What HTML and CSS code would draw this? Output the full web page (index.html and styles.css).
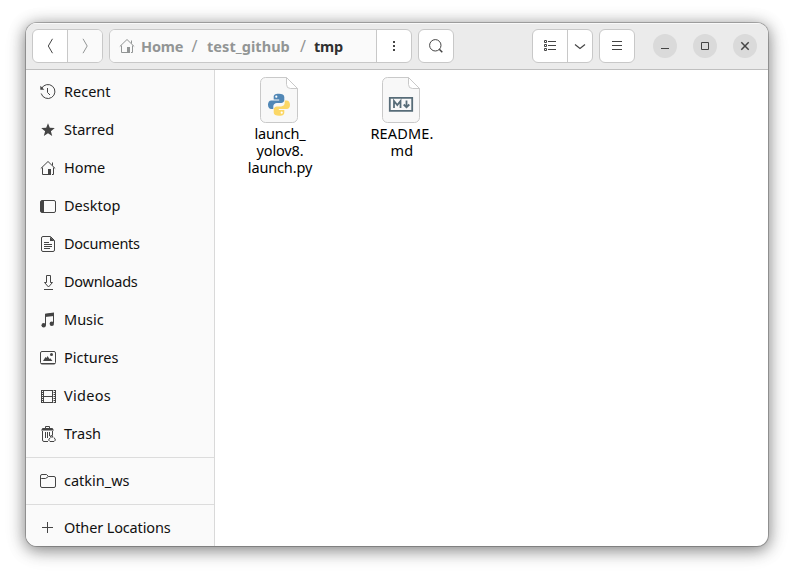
FILE: index.html
```html
<!DOCTYPE html>
<html lang="en">
<head>
<meta charset="utf-8">
<title>tmp</title>
<link rel="stylesheet" href="styles.css">
</head>
<body>
<div class="window">
  <header class="headerbar">
    <div class="group nav">
      <button class="btn"><svg width="16" height="16" viewBox="0 0 16 16"><path d="M10.500 .8 6.300 8l4.200 7.200"/></svg></button>
      <button class="btn off"><svg width="16" height="16" viewBox="0 0 16 16"><path d="M6 .8 10.200 8 6 15.200"/></svg></button>
    </div>
    <div class="group path">
      <div class="crumbs">
        <svg width="16" height="16" viewBox="0 0 16 16"><path d="M.8 8.500 8 1.500l7.200 7M12.500 2.500v3M2.500 7.500v7h6M13.500 7.500v7H12"/><path class="solid" d="M8 9h3v6H8z"/></svg>
        <span class="crumb home">Home</span><span class="slash">/</span><span class="crumb repo">test_github</span><span class="slash">/</span><span class="crumb current">tmp</span>
      </div>
      <button class="btn"><svg width="16" height="16" viewBox="0 0 16 16"><path class="solid" d="M7 3h2v2H7zM7 7h2v2H7zM7 11h2v2H7z"/></svg></button>
    </div>
    <div class="group"><button class="btn single"><svg width="16" height="16" viewBox="0 0 16 16"><circle cx="7.300" cy="7.300" r="5.700"/><path d="m11.300 11.300 3 3" stroke-width="1.500"/></svg></button></div>
    <div class="group view">
      <button class="btn"><svg width="16" height="16" viewBox="0 0 16 16"><path d="M2.500 2.500h2v2h-2zM2.500 6.500h2v2h-2zM2.500 10.500h2v2h-2zM6 3.500h8M6 7.500h8M6 11.500h8"/></svg></button>
      <button class="btn narrow"><svg width="16" height="16" viewBox="0 0 16 16"><path d="m3 6.500 5 4 5-4" stroke-width="1.200"/></svg></button>
    </div>
    <div class="group menu"><button class="btn single"><svg width="16" height="16" viewBox="0 0 16 16"><path d="M3 3.500h10M3 7.500h10M3 11.500h10"/></svg></button></div>
    <div class="controls">
      <button class="control"><svg width="16" height="16" viewBox="0 0 16 16"><path d="M4 10.500h8"/></svg></button>
      <button class="control"><svg width="16" height="16" viewBox="0 0 16 16"><path d="M4.500 4.500h7v7h-7z"/></svg></button>
      <button class="control"><svg width="16" height="16" viewBox="0 0 16 16"><path d="m4.300 4.300 7.400 7.400m0-7.400-7.400 7.400" stroke-width="1.500"/></svg></button>
    </div>
  </header>
  <div class="body">
    <nav class="sidebar">
      <div class="row"><svg width="16" height="16" viewBox="0 0 16 16"><path d="M1.600 4.500A7 7 0 1 1 1.200 9.500"/><path d="M7.500 4v4.500l2.500 2.500"/><path class="solid" d="M.3 1.800v4h4z"/></svg><span>Recent</span></div>
      <div class="row"><svg width="16" height="16" viewBox="0 0 16 16"><path class="solid" d="m8 1.200 1.800 4.600 5 .3-3.900 3.100 1.300 4.800L8 11.300 3.800 14l1.300-4.800-3.900-3.100 5-.3z"/></svg><span>Starred</span></div>
      <div class="row"><svg width="16" height="16" viewBox="0 0 16 16"><path d="M.8 8.500 8 1.500l7.200 7M12.500 2.500v3M2.500 7.500v7h6M13.500 7.500v7H12"/><path class="solid" d="M8 9h3v6H8z"/></svg><span>Home</span></div>
      <div class="row"><svg width="16" height="16" viewBox="0 0 16 16"><rect x=".5" y="2.500" width="15" height="12" rx="1.500"/><path class="solid" d="M1 3h3v11H1z"/></svg><span>Desktop</span></div>
      <div class="row"><svg width="16" height="16" viewBox="0 0 16 16"><path d="M3 .5h7.500l4 4V14a1.500 1.500 0 0 1-1.500 1.500H3A1.500 1.500 0 0 1 1.500 14V2A1.500 1.500 0 0 1 3 .5z"/><path class="solid" d="M10 .8V5h4.500z"/><path d="M4 6.500h5M4 8.500h8M4 10.500h8M4 12.500h6"/></svg><span class="tight">Documents</span></div>
      <div class="row"><svg width="16" height="16" viewBox="0 0 16 16"><path d="M6.500 1.500h4v7h2L8.500 13l-4-4.500h2zM4 15.500h9"/></svg><span class="tight">Downloads</span></div>
      <div class="row"><svg width="16" height="16" viewBox="0 0 16 16"><path d="M5.500 13V2.500l8-1V11"/><path class="solid" d="M5 1.700 14 .5V4L5 5z"/><circle class="solid" cx="3.700" cy="13.200" r="2.200"/><circle class="solid" cx="11.800" cy="11.800" r="2.200"/></svg><span>Music</span></div>
      <div class="row"><svg width="16" height="16" viewBox="0 0 16 16"><rect x=".5" y="1.500" width="15" height="12.500" rx="1.500"/><path d="M1 13.500h14"/><path class="solid" d="m3 11 2.500-4 1 1 1-2 2 3 .8-.8L12.500 11z"/><circle class="solid" cx="11.500" cy="4.500" r="1.500"/></svg><span>Pictures</span></div>
      <div class="row"><svg width="16" height="16" viewBox="0 0 16 16"><path d="M2.500 2v13M14.500 2v13" stroke-width="2" stroke-dasharray="1 1"/><path d="M1.500 2v13M3.500 2v13M12.500 2v13M15.500 2v13M3 2.500h10M3 8.500h10M3 14.500h10"/></svg><span class="loose">Videos</span></div>
      <div class="row"><svg width="16" height="16" viewBox="0 0 16 16"><path d="M5.500 2V.5h4V2M2.500 5v9q0 1.500 1.500 1.500h4M12.500 5v4.500M5.500 6v6M7.500 6v6M9.500 6v4"/><path class="solid" d="M1 4.500 2.500 2h10L14 4.500z"/><path d="m11.500 9 1.500 2h-3zM10 12l-1.500 2 1.500 1.500h4l1.500-1.500-1.500-2.500"/></svg><span>Trash</span></div>
      <div class="separator"></div>
      <div class="row"><svg width="16" height="16" viewBox="0 0 16 16"><path d="M2 1.500h4.500l2 2H14A1.500 1.500 0 0 1 15.500 5v8a1.500 1.500 0 0 1-1.500 1.500H2A1.500 1.500 0 0 1 .5 13V3A1.500 1.500 0 0 1 2 1.500zM.5 6q0-.5 1-.5h4l3-2"/></svg><span>catkin_ws</span></div>
      <div class="separator"></div>
      <div class="row"><svg width="16" height="16" viewBox="0 0 16 16"><path d="M7.500 2v11M2 7.500h11"/></svg><span class="tight half">Other Locations</span></div>
    </nav>
    <main class="files">
      <div class="file">
        <svg class="doc" width="38" height="48" viewBox="0 0 38 48">
          <path class="page" d="M5.500 1.500h21L37.500 12.500v29a5 5 0 0 1-5 5h-27a5 5 0 0 1-5-5v-35a5 5 0 0 1 5-5z"/><path class="fold" d="M26.500 1.500v7a4 4 0 0 0 4 4h7z"/>
          <g id="snake" transform="translate(19 28.700)">
            <path class="blue" d="M0-11c-4.600 0-5.300 1.700-5.300 3.300v2.500H.2v.9h-7.800C-10-4.300-11-2.300-11 0s1.200 4.300 3.300 4.300h2V1.600c0-2 1.700-3.300 3.500-3.300h4.400c1.700 0 3.100-1.400 3.100-3v-3C5.300-10 3-11 0-11z"/>
            <path class="yellow" transform="rotate(180)" d="M0-11c-4.600 0-5.300 1.700-5.300 3.300v2.500H.2v.9h-7.800C-10-4.300-11-2.300-11 0s1.200 4.300 3.300 4.300h2V1.600c0-2 1.700-3.300 3.500-3.300h4.400c1.700 0 3.100-1.400 3.100-3v-3C5.300-10 3-11 0-11z"/>
            <circle class="eye" cx="-2.700" cy="-8" r="1.100"/><circle class="eye" cx="2.700" cy="8" r="1.100"/>
          </g>
        </svg>
        <div class="label"><span>launch_</span><span>yolov8.</span><span>launch.py</span></div>
      </div>
      <div class="file">
        <svg class="doc" width="38" height="48" viewBox="0 0 38 48">
          <path class="page" d="M5.500 1.500h21L37.500 12.500v29a5 5 0 0 1-5 5h-27a5 5 0 0 1-5-5v-35a5 5 0 0 1 5-5z"/><path class="fold" d="M26.500 1.500v7a4 4 0 0 0 4 4h7z"/>
          <path class="md" d="M7.800 21.800h22.400v13H7.800zM12 32v-7l3.300 4 3.200-4v7M24.500 24.500V31m-2.800-2.500 2.800 2.700 2.800-2.700"/>
        </svg>
        <div class="label readme"><span>README.</span><span>md</span></div>
      </div>
    </main>
  </div>
</div>
</body>
</html>
```
FILE: styles.css
```css
* { box-sizing: border-box; }
body {
  margin: 0;
  padding: 23px 26px 29px;
  height: 575px;
  overflow: hidden;
  background: #fff;
  font: 14.5px/20px "Noto Sans", "Open Sans", sans-serif;
  color: #111;
}
svg { display: block; flex: none; fill: none; stroke: #444; stroke-width: 1; }
svg .solid { fill: #444; stroke: none; }
button { padding: 0; border: 0; background: none; }
.window {
  display: flex;
  flex-direction: column;
  width: 742px;
  height: 523px;
  overflow: hidden;
  border-radius: 11px;
  background: #fff;
  box-shadow: 0 0 0 1px rgba(0, 0, 0, .23), 0 3px 16px 1px rgba(0, 0, 0, .45), 0 4px 24px rgba(0, 0, 0, .1);
}
.headerbar {
  display: flex;
  flex: none;
  align-items: flex-start;
  gap: 6px;
  height: 47px;
  padding: 6px 11px 0 6px;
  background: #ebebeb;
  border-bottom: 1px solid #bfbfbf;
  box-shadow: inset 0 1px #f9f9f9;
}
.group {
  display: flex;
  height: 34px;
  border: 1px solid #c8c8c8;
  border-radius: 6px;
  background: #fff;
  overflow: hidden;
}
.btn { display: grid; place-items: center; width: 34px; }
.btn + .btn, .crumbs + .btn { width: 35px; border-left: 1px solid #c8c8c8; }
.btn.off { background: #fafafa; }
.btn.off svg { stroke: #929595; }
.btn.narrow.narrow { width: 25px; }
.path { width: 303px; }
.crumbs { display: flex; flex: 1; align-items: center; padding: 0 0 1px 9px; background: #fafafa; color: #929595; font-weight: 700; white-space: nowrap; }
.crumbs svg { stroke: #929595; margin-right: 6px; }
.crumbs svg .solid { fill: #929595; }
.home { width: 41px; letter-spacing: -.2px; }
.repo { width: 84px; letter-spacing: .05px; }
.slash { width: 24px; text-align: center; font-weight: 400; font-size: 16px; }
.home + .slash { width: 25px; }
.current { color: #303030; letter-spacing: -.2px; margin-left: -1px; }
.view { margin-left: auto; }
.controls { display: flex; gap: 16px; margin: 5px 0 0 12px; }
.control { display: grid; place-items: center; width: 24px; height: 24px; border-radius: 50%; background: #dadada; }
.body { display: flex; flex: 1; min-height: 0; }
.sidebar { flex: none; width: 189px; padding-top: 3px; overflow: hidden; background: #fafafa; border-right: 1px solid #d9d9d9; }
.row { display: flex; align-items: center; gap: 8px; height: 38px; padding-left: 14px; white-space: nowrap; }
.row span { padding-bottom: 2px; }
.tight { letter-spacing: -.27px; }
.half { letter-spacing: -.13px; }
.loose { letter-spacing: .3px; }
.separator { height: 1px; margin: 4px 0; background: #dcdcdc; }
.files { display: flex; padding: 6px 0 0 4px; }
.file { width: 122px; }
.doc { margin: 0 0 0 41px; }
.page { fill: #f8f8f8; stroke: #c9c9c9; }
.fold { fill: #fff; stroke: #c9c9c9; }
.blue { fill: #5187b6; stroke: none; }
.yellow { fill: #fbd766; stroke: none; }
.eye { fill: #fff; stroke: none; }
.md { stroke: #576c78; stroke-width: 1.800; }
.label { padding: 1px 0 0; text-align: center; line-height: 17px; letter-spacing: -.15px; color: #000; }
.label span { display: block; }
.readme { letter-spacing: .15px; }
```
